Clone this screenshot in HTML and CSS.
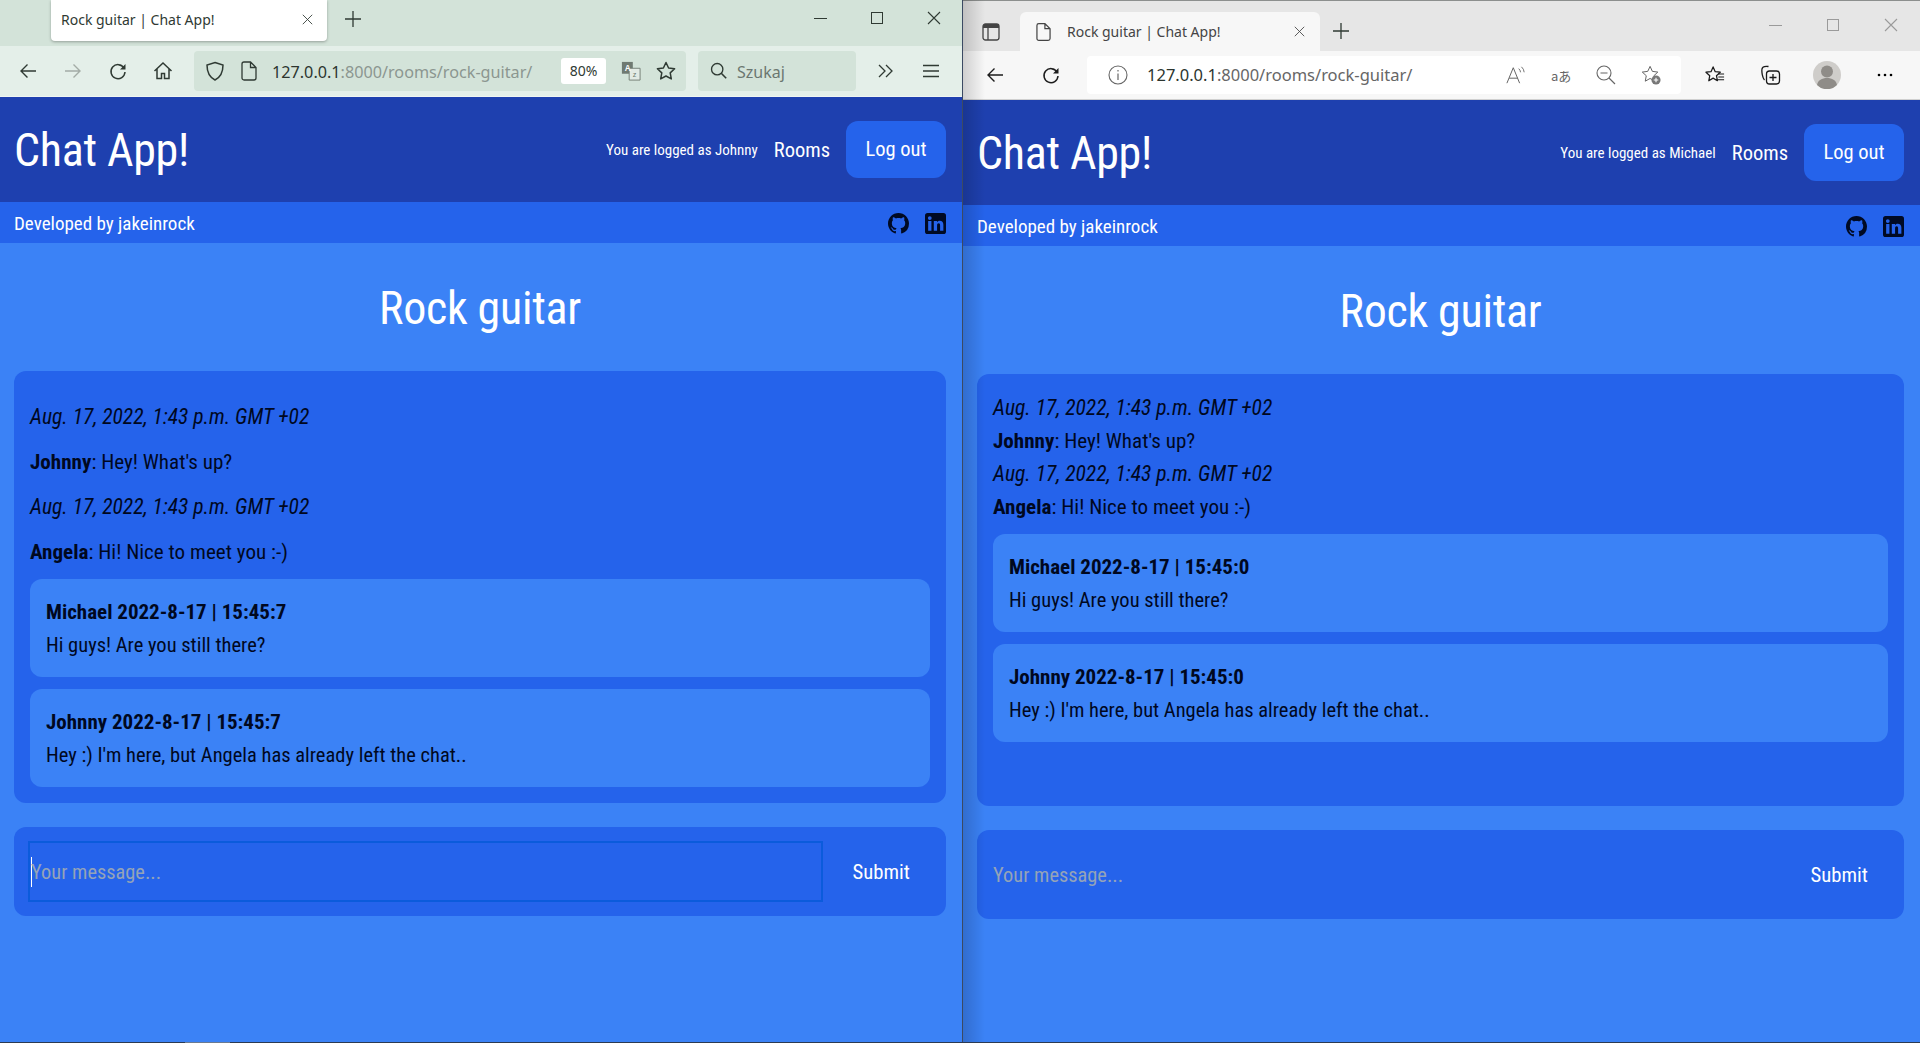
FILE: index.html
```html
<!DOCTYPE html>
<html lang="en">
<head>
  <meta charset="UTF-8">
  <title>Rock guitar | Chat App!</title>
  <link rel="stylesheet" href="styles.css">
</head>
<body>
  <svg class="sprites" width="0" height="0">
    <symbol id="github" viewBox="0 0 16 16"><path d="M8 0C3.58 0 0 3.58 0 8c0 3.54 2.29 6.53 5.47 7.59.4.07.55-.17.55-.38 0-.19-.01-.82-.01-1.49-2.01.37-2.53-.49-2.69-.94-.09-.23-.48-.94-.82-1.13-.28-.15-.68-.52-.01-.53.63-.01 1.08.58 1.23.82.72 1.21 1.87.87 2.33.66.07-.52.28-.87.51-1.07-1.78-.2-3.64-.89-3.64-3.95 0-.87.31-1.59.82-2.15-.08-.2-.36-1.02.08-2.12 0 0 .67-.21 2.2.82.64-.18 1.32-.27 2-.27s1.36.09 2 .27c1.53-1.04 2.2-.82 2.2-.82.44 1.1.16 1.92.08 2.12.51.56.82 1.27.82 2.15 0 3.07-1.87 3.75-3.65 3.95.29.25.54.73.54 1.48 0 1.07-.01 1.93-.01 2.2 0 .21.15.46.55.38A8 8 0 0 0 16 8c0-4.42-3.58-8-8-8z"/></symbol>
    <symbol id="linkedin" viewBox="0 0 16 16"><path d="M2 0h12a2 2 0 0 1 2 2v12a2 2 0 0 1-2 2H2a2 2 0 0 1-2-2V2a2 2 0 0 1 2-2zm.4 6.1v7.5h2.5V6.1H2.4zm1.25-3.7a1.45 1.45 0 1 0 0 2.9 1.45 1.45 0 0 0 0-2.9zM6.7 6.1v7.5h2.5V9.5c0-1.1.4-1.6 1.2-1.6.8 0 1.1.6 1.1 1.6v4.1H14V9c0-2.1-1.1-3.1-2.7-3.1-1.1 0-1.8.5-2.1 1.1V6.1H6.7z"/></symbol>
    <symbol id="back" viewBox="0 0 20 20"><path d="M18 10H3M9.5 3.5 3 10l6.5 6.5" fill="none" stroke="currentColor" stroke-width="1.4"/></symbol>
    <symbol id="forward" viewBox="0 0 20 20"><path d="M2 10h15M10.5 3.5 17 10l-6.5 6.5" fill="none" stroke="currentColor" stroke-width="1.4"/></symbol>
    <symbol id="reload" viewBox="0 0 20 20"><path d="M16 7a7 7 0 1 0 1 4" fill="none" stroke="currentColor" stroke-width="1.5"/><path d="M17.5 3v5.5H12z" fill="currentColor"/></symbol>
    <symbol id="cross" viewBox="0 0 14 14"><path d="M1 1l12 12M13 1 1 13" fill="none" stroke="currentColor" stroke-width="1.1"/></symbol>
    <symbol id="plus" viewBox="0 0 16 16"><path d="M8 0v16M0 8h16" fill="none" stroke="currentColor" stroke-width="1.3"/></symbol>
    <symbol id="page" viewBox="0 0 16 20"><path d="M3 1h6.5L15 6.5V17a2 2 0 0 1-2 2H3a2 2 0 0 1-2-2V3a2 2 0 0 1 2-2zM9.5 1v5.5H15" fill="none" stroke="currentColor" stroke-width="1.3"/></symbol>
    <symbol id="star" viewBox="0 0 20 20"><path d="M10 1.5l2.6 5.5 6 .8-4.4 4.1 1.1 6-5.3-2.9-5.300 2.900 1.100-6L1.400 7.800l6-.8z" fill="none" stroke="currentColor" stroke-width="1.5" stroke-linejoin="round"/></symbol>
  </svg>

  <div class="desktop">
    <div class="windows">
      <section class="window window-firefox">
        <div class="tabstrip">
          <div class="tab">
            <span class="tab-title">Rock guitar | Chat App!</span>
            <svg class="tab-close"><use href="#cross"/></svg>
          </div>
          <svg class="new-tab"><use href="#plus"/></svg>
          <div class="window-controls">
            <span class="ctl-min"></span>
            <span class="ctl-max"></span>
            <svg class="ctl-close"><use href="#cross"/></svg>
          </div>
        </div>
        <div class="toolbar">
          <svg class="tool-icon"><use href="#back"/></svg>
          <svg class="tool-icon dim"><use href="#forward"/></svg>
          <svg class="tool-icon"><use href="#reload"/></svg>
          <svg class="tool-icon" viewBox="0 0 20 20"><path d="M1.5 10 10 2l8.500 8M4 8v9.500h4.500v-5h3v5H16V8" fill="none" stroke="currentColor" stroke-width="1.5"/></svg>
          <div class="urlbar">
            <svg class="url-icon" viewBox="0 0 20 20"><path d="M10 1.500 18 4c0 7-2 12-8 15C4 16 2 11 2 4z" fill="none" stroke="currentColor" stroke-width="1.5"/></svg>
            <svg class="url-icon page-icon"><use href="#page"/></svg>
            <span class="url"><b>127.0.0.1</b>:8000/rooms/rock-guitar/</span>
            <span class="zoom-badge">80%</span>
            <svg class="url-icon translate-icon" viewBox="0 0 22 22"><path d="M1 1h12v13H1z" fill="#6f7a72"/><path d="M9 8h12v13H9z" fill="#e3ebe5" stroke="#6f7a72"/><text x="4" y="11" font-size="9" font-weight="700" fill="#fff" font-family="Liberation Sans">A</text><text x="13" y="18" font-size="8" fill="#6f7a72" font-family="Liberation Sans">z</text></svg>
            <svg class="url-icon star-icon"><use href="#star"/></svg>
          </div>
          <div class="searchbar">
            <svg class="search-icon" viewBox="0 0 20 20"><circle cx="8" cy="8" r="6.3" fill="none" stroke="currentColor" stroke-width="1.5"/><path d="M12.5 12.5 18 18" stroke="currentColor" stroke-width="1.8"/></svg>
            <span class="search-text">Szukaj</span>
          </div>
          <svg class="overflow-icon" viewBox="0 0 16 14"><path d="M1 1l6 6-6 6M8 1l6 6-6 6" fill="none" stroke="currentColor" stroke-width="1.3"/></svg>
          <svg class="menu-icon" viewBox="0 0 16 14"><path d="M0 1.5h16M0 7h16M0 12.5h16" stroke="currentColor" stroke-width="1.4"/></svg>
        </div>

        <div class="app">
          <header class="app-header">
            <h1 class="brand">Chat App!</h1>
            <nav class="nav">
              <span class="logged">You are logged as Johnny</span>
              <a class="nav-link">Rooms</a>
              <a class="logout">Log out</a>
            </nav>
          </header>
          <div class="subbar">
            <span>Developed by jakeinrock</span>
            <div class="socials">
              <svg class="social"><use href="#github"/></svg>
              <svg class="social"><use href="#linkedin"/></svg>
            </div>
          </div>
          <main class="room">
            <h2 class="room-title">Rock guitar</h2>
            <div class="chat">
              <div class="history history-spaced">
                <p class="stamp">Aug. 17, 2022, 1:43 p.m. GMT +02</p>
                <p><b>Johnny</b>: Hey! What's up?</p>
                <p class="stamp">Aug. 17, 2022, 1:43 p.m. GMT +02</p>
                <p><b>Angela</b>: Hi! Nice to meet you :-)</p>
              </div>
              <div class="bubble">
                <div class="bubble-head">Michael 2022-8-17 | 15:45:7</div>
                <div>Hi guys! Are you still there?</div>
              </div>
              <div class="bubble">
                <div class="bubble-head">Johnny 2022-8-17 | 15:45:7</div>
                <div>Hey :) I'm here, but Angela has already left the chat..</div>
              </div>
            </div>
            <form class="send">
              <div class="field field-focus"><span class="caret"></span><span class="placeholder">Your message...</span></div>
              <span class="submit">Submit</span>
            </form>
          </main>
        </div>
      </section>

      <section class="window window-edge">
        <div class="tabstrip">
          <svg class="tabs-icon" viewBox="0 0 18 18"><rect x="1" y="1" width="16" height="16" rx="2.5" fill="none" stroke="currentColor" stroke-width="1.3"/><path d="M1 3.5A2.5 2.5 0 0 1 3.5 1h11A2.5 2.5 0 0 1 17 3.5V5H1z" fill="currentColor"/><path d="M6 5v12" stroke="currentColor" stroke-width="1.3"/></svg>
          <div class="tab">
            <svg class="tab-page"><use href="#page"/></svg>
            <span class="tab-title">Rock guitar | Chat App!</span>
            <svg class="tab-close"><use href="#cross"/></svg>
          </div>
          <svg class="new-tab"><use href="#plus"/></svg>
          <div class="window-controls">
            <span class="ctl-min"></span>
            <span class="ctl-max"></span>
            <svg class="ctl-close"><use href="#cross"/></svg>
          </div>
        </div>
        <div class="toolbar">
          <svg class="tool-icon"><use href="#back"/></svg>
          <svg class="tool-icon"><use href="#reload"/></svg>
          <div class="urlbar">
            <svg class="url-icon info-icon" viewBox="0 0 20 20"><circle cx="10" cy="10" r="9" fill="none" stroke="currentColor" stroke-width="1.1"/><path d="M10 8.5V15M10 5v1.5" stroke="currentColor" stroke-width="1.2"/></svg>
            <span class="url"><b>127.0.0.1</b>:8000/rooms/rock-guitar/</span>
            <svg class="url-icon edge-icon" viewBox="0 0 22 20"><path d="M1 19 8 2l7 17M3.5 13.5h9.5" fill="none" stroke="currentColor" stroke-width="1.1"/><path d="M14 3a6 6 0 0 1 2 4M17 1a9 9 0 0 1 3 6" fill="none" stroke="currentColor"/></svg>
            <span class="edge-translate">aあ</span>
            <svg class="url-icon edge-icon" viewBox="0 0 20 20"><circle cx="8" cy="8" r="7" fill="none" stroke="currentColor" stroke-width="1.1"/><path d="M4.5 8h7M13 13l6 6" stroke="currentColor" stroke-width="1.2"/></svg>
            <svg class="url-icon edge-fav" viewBox="0 0 22 22"><path d="M10 1.5l2.5 5.5 6 .8-4.300 4 1 6-5.200-3-5.300 3 1.100-6L1.400 7.800l6-.8z" fill="none" stroke="currentColor" stroke-width="1.1" stroke-linejoin="round"/><circle cx="16.5" cy="16.5" r="5" fill="#777"/><path d="M14 16.5h5M16.5 14v5" stroke="#fff" stroke-width="1.2"/></svg>
          </div>
          <svg class="edge-tool edge-favs" viewBox="0 0 22 20"><path d="M8.5 1.5l2.200 5 5.300.6-4 3.600 1 5.300-4.500-2.700L4 16l1-5.300-4-3.600 5.300-.6z" fill="none" stroke="currentColor" stroke-width="1.3" stroke-linejoin="round"/><path d="M14 9h6M14 12h6M13 15h7" stroke="currentColor" stroke-width="1.1"/></svg>
          <svg class="edge-tool" viewBox="0 0 20 20"><path d="M4 15C2 13 1 7 1.5 4 2 1.5 5 1 8 1.5" fill="none" stroke="currentColor" stroke-width="1.3"/><rect x="6" y="6" width="13" height="13" rx="3" fill="none" stroke="currentColor" stroke-width="1.3"/><path d="M12.5 9v7M9 12.5h7" stroke="currentColor" stroke-width="1.3"/></svg>
          <svg class="edge-avatar" viewBox="0 0 28 28"><circle cx="14" cy="14" r="14" fill="#cfcdca"/><circle cx="14" cy="10.5" r="6" fill="#8f8c88"/><path d="M4 24c1-5 5-7 10-7s9 2 10 7a14 14 0 0 1-20 0z" fill="#8f8c88"/></svg>
          <svg class="edge-dots" viewBox="0 0 16 4"><circle cx="2" cy="2" r="1.3"/><circle cx="8" cy="2" r="1.3"/><circle cx="14" cy="2" r="1.3"/></svg>
        </div>

        <div class="app">
          <header class="app-header">
            <h1 class="brand">Chat App!</h1>
            <nav class="nav">
              <span class="logged">You are logged as Michael</span>
              <a class="nav-link">Rooms</a>
              <a class="logout">Log out</a>
            </nav>
          </header>
          <div class="subbar">
            <span>Developed by jakeinrock</span>
            <div class="socials">
              <svg class="social"><use href="#github"/></svg>
              <svg class="social"><use href="#linkedin"/></svg>
            </div>
          </div>
          <main class="room">
            <h2 class="room-title">Rock guitar</h2>
            <div class="chat">
              <div class="history">
                <p class="stamp">Aug. 17, 2022, 1:43 p.m. GMT +02</p>
                <p><b>Johnny</b>: Hey! What's up?</p>
                <p class="stamp">Aug. 17, 2022, 1:43 p.m. GMT +02</p>
                <p><b>Angela</b>: Hi! Nice to meet you :-)</p>
              </div>
              <div class="bubble">
                <div class="bubble-head">Michael 2022-8-17 | 15:45:0</div>
                <div>Hi guys! Are you still there?</div>
              </div>
              <div class="bubble">
                <div class="bubble-head">Johnny 2022-8-17 | 15:45:0</div>
                <div>Hey :) I'm here, but Angela has already left the chat..</div>
              </div>
            </div>
            <form class="send">
              <div class="field"><span class="placeholder">Your message...</span></div>
              <span class="submit">Submit</span>
            </form>
          </main>
        </div>
      </section>
    </div>
    <div class="taskbar"><span class="taskbar-item"></span></div>
  </div>
</body>
</html>
```

FILE: styles.css
```css
* {
  box-sizing: border-box;
}

html, body {
  margin: 0;
  height: 100%;
  overflow: hidden;
}

.sprites {
  position: absolute;
}

.desktop {
  display: flex;
  flex-direction: column;
  height: 1043px;
  font-family: "Roboto Condensed", Roboto, "Liberation Sans", sans-serif;
}

.windows {
  display: flex;
  flex: 1;
  min-height: 0;
}

.taskbar {
  flex: none;
  height: 1px;
  background: #2b3a52;
}

.taskbar-item {
  display: block;
  width: 45px;
  height: 1px;
  margin-left: 185px;
  background: #6b7a90;
}

.window {
  display: flex;
  flex-direction: column;
  min-width: 0;
}

.window-firefox {
  width: 962px;
}

.window-edge {
  position: relative;
  width: 958px;
  border-left: 1px solid #3b4a63;
}

/* shadow the front window throws on its own left edge */
.window-edge::before {
  content: "";
  position: absolute;
  top: 0;
  bottom: 0;
  left: 0;
  width: 22px;
  background: linear-gradient(to right, rgba(0, 0, 0, 0.16), rgba(0, 0, 0, 0));
  pointer-events: none;
}

/* browser chrome */
.tabstrip, .toolbar {
  display: flex;
  align-items: center;
  flex: none;
  font-family: "Noto Sans", "Open Sans", sans-serif;
  color: #2f3a33;
}

.window-firefox .tabstrip {
  height: 46px;
  padding-left: 51px;
  background: #d3e3d9;
}

.window-edge .tabstrip {
  height: 51px;
  padding: 11px 0 0 19px;
  background: #e6e6e6;
  border-top: 1px solid #8c8f8e;
}

.tab {
  display: flex;
  align-items: center;
  background: #fff;
  font-size: 14px;
}

.window-firefox .tab {
  width: 276px;
  height: 41px;
  margin-top: -5px;
  padding: 0 14px 2px 10px;
  border-radius: 0 0 4px 4px;
  box-shadow: 0 1px 3px rgba(0, 0, 0, 0.3);
}

.window-edge .tab {
  width: 300px;
  height: 39px;
  margin-left: 20px;
  padding: 0 15px 0 16px;
  background: #f7f7f7;
  border-radius: 6px 6px 0 0;
  color: #444;
}

.tab-title {
  flex: 1;
  white-space: nowrap;
}

.tab-page {
  width: 15px;
  height: 20px;
  margin-right: 16px;
  color: #444;
}

.tab-close {
  width: 11px;
  height: 11px;
}

.new-tab {
  width: 16px;
  height: 16px;
}

.window-firefox .new-tab {
  margin: -9px 0 0 18px;
}

.window-edge .new-tab {
  margin: -2px 0 0 13px;
}

.tabs-icon {
  width: 18px;
  height: 18px;
  color: #444;
}

.window-controls {
  display: flex;
  align-items: center;
  align-self: flex-start;
  margin-left: auto;
}

.window-firefox .window-controls {
  gap: 44px;
  height: 36px;
  padding-right: 21px;
}

.window-edge .window-controls {
  gap: 45px;
  height: 16px;
  margin-top: 5px;
  padding-right: 22px;
  color: #9a9a9a;
}

.ctl-min {
  width: 13px;
  border-top: 1px solid currentColor;
}

.ctl-max {
  width: 12px;
  height: 12px;
  border: 1px solid currentColor;
}

.ctl-close {
  width: 14px;
  height: 14px;
}

.window-firefox .toolbar {
  height: 51px;
  padding-left: 18px;
  background: #e4efe9;
  border-bottom: 1px solid #f0f5f2;
}

.window-edge .toolbar {
  height: 49px;
  padding-left: 22px;
  background: #f7f7f7;
  border-bottom: 1px solid #d0d0d0;
}

.tool-icon {
  flex: none;
  width: 20px;
  height: 20px;
  margin-right: 25px;
}

.tool-icon.dim {
  color: #a3aca6;
}

.window-edge .tool-icon {
  margin-right: 36px;
  color: #1d1d1d;
}

.urlbar {
  display: flex;
  align-items: center;
  flex: none;
  height: 40px;
  border-radius: 4px;
}

.window-firefox .urlbar {
  width: 492px;
  margin-left: -4px;
  padding-left: 11px;
  background: #d3e3d9;
}

.window-edge .urlbar {
  width: 594px;
  height: 38px;
  margin-left: -10px;
  padding-left: 21px;
  background: #fff;
  color: #666;
}

.url {
  flex: 1;
  color: #8b9690;
  white-space: nowrap;
}

.url b {
  font-weight: 400;
  color: #2c352f;
}

.window-firefox .url {
  padding-top: 2px;
  font-size: 16.2px;
}

.window-edge .url {
  padding-bottom: 2px;
  color: #666;
  font-size: 16.5px;
}

.url-icon {
  flex: none;
  width: 20px;
  height: 20px;
  margin-right: 16px;
}

.page-icon {
  width: 16px;
  margin-right: 15px;
}

.info-icon {
  margin-right: 19px;
}

.zoom-badge {
  width: 45px;
  height: 26px;
  margin-right: 15px;
  border-radius: 3px;
  background: #fff;
  font-size: 14px;
  line-height: 26px;
  text-align: center;
}

.translate-icon {
  margin-right: 15px;
}

.star-icon {
  margin-right: 10px;
}

.edge-icon {
  margin-right: 25px;
}

.edge-fav {
  margin-right: 20px;
}

.edge-translate {
  width: 20px;
  margin-right: 25px;
  font-family: "Noto Sans CJK JP", sans-serif;
  font-size: 13px;
  white-space: nowrap;
}

.searchbar {
  display: flex;
  align-items: center;
  flex: none;
  gap: 9px;
  width: 158px;
  height: 40px;
  margin-left: 12px;
  padding-left: 12px;
  background: #d3e3d9;
  border-radius: 4px;
  font-size: 16px;
  color: #6b7770;
}

.search-text {
  padding-top: 2px;
}

.search-icon {
  width: 18px;
  height: 18px;
  color: #2f3a33;
}

.overflow-icon {
  width: 16px;
  height: 14px;
  margin-left: 22px;
}

.menu-icon {
  width: 16px;
  height: 14px;
  margin-left: 29px;
}

.edge-tool {
  flex: none;
  width: 21px;
  height: 20px;
  margin-right: 32px;
  color: #1a1a1a;
}

.edge-favs {
  margin: 0 34px 0 24px;
}

.edge-avatar {
  flex: none;
  width: 28px;
  height: 28px;
  margin-right: 36px;
}

.edge-dots {
  width: 16px;
  height: 4px;
}

/* chat app */
.app {
  display: flex;
  flex: 1;
  flex-direction: column;
  background: #3b82f6;
  color: #fff;
  font-size: 20.5px;
}

.app-header {
  display: flex;
  align-items: center;
  justify-content: space-between;
  height: 105px;
  padding: 0 16px 0 14px;
  background: #1e40af;
}

.brand {
  margin: 0;
  font-size: 46px;
  font-weight: 400;
  letter-spacing: -0.3px;
}

.nav {
  display: flex;
  align-items: center;
}

.logged {
  font-size: 15px;
  margin-right: 16px;
}

.nav-link {
  font-size: 20.5px;
  margin-right: 16px;
}

.logout {
  width: 100px;
  background: #2563eb;
  border-radius: 12px;
  font-size: 20.5px;
  line-height: 57px;
  text-align: center;
}

.subbar {
  display: flex;
  align-items: center;
  justify-content: space-between;
  height: 41px;
  padding: 2px 16px 0 14px;
  background: #2563eb;
  font-size: 19px;
}

.socials {
  display: flex;
  gap: 16px;
}

.social {
  width: 21px;
  height: 21px;
  fill: #000a24;
}

.room {
  display: flex;
  flex-direction: column;
  padding: 0 16px 0 14px;
  color: #00081f;
}

.room-title {
  margin: 0;
  height: 128px;
  color: #fff;
  font-size: 46px;
  font-weight: 400;
  letter-spacing: -0.3px;
  line-height: 130px;
  text-align: center;
}

.chat {
  height: 432px;
  padding: 16px;
  background: #2563eb;
  border-radius: 12px;
}

.history {
  display: flex;
  flex-direction: column;
  margin: 1px 0 11px;
  font-size: 21.1px;
  line-height: 33px;
}

.history p {
  margin: 0;
}

.history-spaced {
  gap: 12px;
  margin: 13px 0 11px;
}

.stamp {
  font-size: 21.5px;
  font-style: italic;
}

.bubble {
  height: 98px;
  margin-bottom: 12px;
  padding: 17px 16px 0;
  background: #3b82f6;
  border-radius: 12px;
  line-height: 33px;
}

.bubble-head {
  font-size: 21px;
  font-weight: 700;
}

.send {
  display: flex;
  align-items: center;
  height: 89px;
  margin-top: 24px;
  padding: 0 16px;
  background: #2563eb;
  border-radius: 12px;
}

.field {
  display: flex;
  align-items: center;
  flex: 1;
  height: 61px;
  color: #94a3b8;
  font-size: 20.4px;
}

.field-focus {
  margin-left: -2px;
  padding-left: 1px;
  border: 2px solid #0b5bdc;
}

.caret {
  width: 1px;
  height: 30px;
  margin-right: -1px;
  background: #fff;
}

.submit {
  padding: 0 20px 0 30px;
  color: #fff;
  font-size: 20.7px;
}
```
